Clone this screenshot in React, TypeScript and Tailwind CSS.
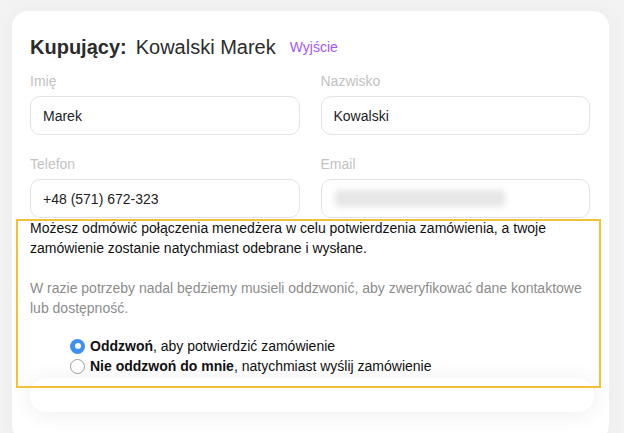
import React, { useState } from 'react'

const Field = ({ label, value, blurred }: { label: string; value?: string; blurred?: boolean }) => (
    <div className="flex flex-col">
        <label className="text-sm leading-5 text-[#c2c2c2] mb-[5px]">{label}</label>
        <div className="h-[39px] rounded-[10px] border border-[#e3e3e3] bg-white px-3 flex items-center text-sm text-[#222]">
            {blurred ? (
                <div className="h-[17px] w-[170px] ml-[1px] rounded-sm bg-[#e6e6e6] blur-[3px]" />
            ) : (
                value
            )}
        </div>
    </div>
)

const Radio = ({ checked, onClick, children }: { checked: boolean; onClick: () => void; children: React.ReactNode }) => (
    <label className="flex items-center h-5 gap-[5px] cursor-pointer" onClick={onClick}>
        {checked ? (
            <span className="w-[15px] h-[15px] rounded-full bg-[#3d8ff2] flex items-center justify-center">
                <span className="w-[6px] h-[6px] rounded-full bg-white" />
            </span>
        ) : (
            <span className="w-[15px] h-[15px] rounded-full border border-[#9a9a9a] bg-white" />
        )}
        <span>{children}</span>
    </label>
)

const App: React.FC = () => {
    const [callBack, setCallBack] = useState(true)

    return (
        <div className="min-h-screen bg-[#f3f3f3] pt-[11px] pl-3 overflow-hidden font-['Liberation_Sans',Arial,sans-serif]">
            <div className="w-[597px] h-[430px] bg-white rounded-2xl shadow-[0_0_24px_rgba(0,0,0,0.04)] px-[18px] pt-[22px]">
                {/* Header */}
                <div className="flex items-center h-7 mb-[10px] w-[560px]">
                    <span className="text-xl font-bold text-[#2b2b2b]">Kupujący:</span>
                    <span className="text-xl text-[#2b2b2b] ml-[9px]">Kowalski Marek</span>
                    <a className="text-sm text-[#a855f7] ml-[14px] cursor-pointer">Wyjście</a>
                </div>

                {/* Form */}
                <div className="grid grid-cols-2 gap-x-[21px] gap-y-[19px] w-[560px]">
                    <Field label="Imię" value="Marek" />
                    <Field label="Nazwisko" value="Kowalski" />
                    <Field label="Telefon" value="+48 (571) 672-323" />
                    <Field label="Email" blurred />
                </div>

                {/* Call confirmation */}
                <div className="relative w-[560px]">
                    <div className="absolute top-px -left-[14px] -right-[11px] bottom-[24px] border-2 border-[#f4c136] pointer-events-none z-10" />
                    <p className="text-sm leading-5 text-[#111]">
                        Możesz odmówić połączenia menedżera w celu potwierdzenia zamówienia, a twoje zamówienie zostanie natychmiast odebrane i wysłane.
                    </p>
                    <p className="mt-5 text-sm leading-5 text-[#8c8c8c]">
                        W razie potrzeby nadal będziemy musieli oddzwonić, aby zweryfikować dane kontaktowe lub dostępność.
                    </p>
                    <div className="mt-[18px] pl-10 flex flex-col text-sm text-[#111]">
                        <Radio checked={callBack} onClick={() => setCallBack(true)}>
                            <b>Oddzwoń</b>, aby potwierdzić zamówienie
                        </Radio>
                        <Radio checked={!callBack} onClick={() => setCallBack(false)}>
                            <b>Nie oddzwoń do mnie</b>, natychmiast wyślij zamówienie
                        </Radio>
                    </div>
                    <div className="mt-[2px] h-[34px] w-[564px] rounded-2xl bg-white shadow-[0_2px_22px_rgba(0,0,0,0.08)]" />
                </div>
            </div>
        </div>
    )
}

export default App
